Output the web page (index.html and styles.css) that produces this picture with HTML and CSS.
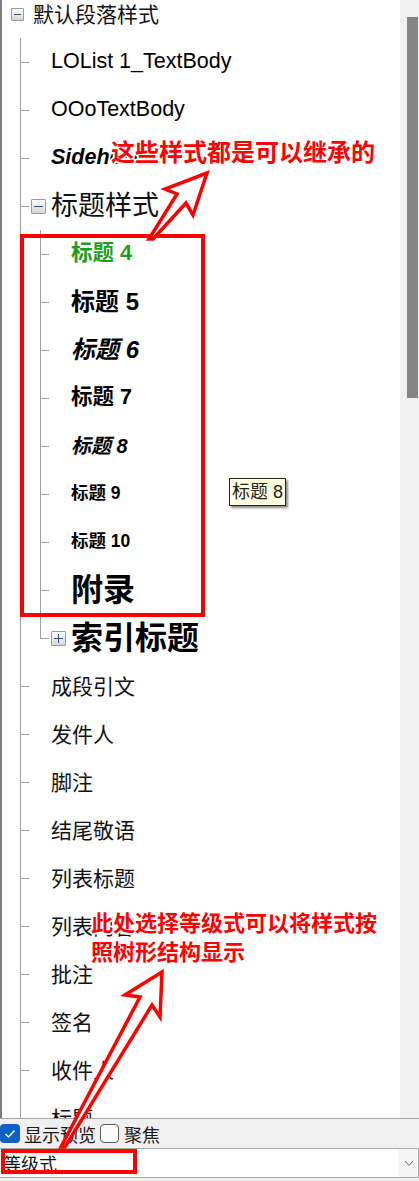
FILE: index.html
```html
<!DOCTYPE html>
<html lang="zh-CN">
<head>
<meta charset="utf-8">
<title>样式</title>
<link rel="stylesheet" href="styles.css">
</head>
<body>
<div class="panel">
  <div class="tree-area">
    <div class="viewport">
      <ul class="tree">
        <li>
          <div class="row has-exp"><span class="exp"></span><span class="lbl root-lbl">默认段落样式</span></div>
          <ul class="children">
            <li><div class="row"><span class="lbl lat">LOList 1_TextBody</span></div></li>
            <li><div class="row"><span class="lbl lat">OOoTextBody</span></div></li>
            <li><div class="row"><span class="lbl lat side">Sidehead</span></div></li>
            <li>
              <div class="row has-exp"><span class="exp"></span><span class="lbl hs">标题样式</span></div>
              <ul class="children">
                <li><div class="row"><span class="lbl h4">标题 4</span></div></li>
                <li><div class="row"><span class="lbl h5">标题 5</span></div></li>
                <li><div class="row"><span class="lbl h6">标题 6</span></div></li>
                <li><div class="row"><span class="lbl h7">标题 7</span></div></li>
                <li><div class="row"><span class="lbl h8">标题 8</span></div></li>
                <li><div class="row"><span class="lbl h9">标题 9</span></div></li>
                <li><div class="row"><span class="lbl h10">标题 10</span></div></li>
                <li><div class="row"><span class="lbl hx">附录</span></div></li>
                <li><div class="row has-exp"><span class="exp plus"></span><span class="lbl hx">索引标题</span></div></li>
              </ul>
            </li>
            <li><div class="row"><span class="lbl cn">成段引文</span></div></li>
            <li><div class="row"><span class="lbl cn">发件人</span></div></li>
            <li><div class="row"><span class="lbl cn">脚注</span></div></li>
            <li><div class="row"><span class="lbl cn">结尾敬语</span></div></li>
            <li><div class="row"><span class="lbl cn">列表标题</span></div></li>
            <li><div class="row"><span class="lbl cn">列表内容</span></div></li>
            <li><div class="row"><span class="lbl cn">批注</span></div></li>
            <li><div class="row"><span class="lbl cn">签名</span></div></li>
            <li><div class="row"><span class="lbl cn">收件人</span></div></li>
            <li><div class="row"><span class="lbl cn">标题</span></div></li>
          </ul>
        </li>
      </ul>
    </div>
    <div class="vscroll"><div class="thumb"></div></div>
  </div>

  <div class="options">
    <span class="cb checked"><svg width="12" height="10" viewBox="0 0 12 10"><polyline points="1.5,5 4.5,8 10.5,1.5" fill="none" stroke="#fff" stroke-width="1.4"/></svg></span>
    <span class="opt-text">显示预览</span>
    <span class="cb unchecked"></span>
    <span class="opt-text">聚焦</span>
  </div>

  <div class="combo">
    <span class="combo-text">等级式</span>
    <span class="combo-btn"><svg width="10" height="7" viewBox="0 0 10 7"><polyline points="1,1 5,5.5 9,1" fill="none" stroke="#666" stroke-width="1"/></svg></span>
  </div>

  <div class="tooltip">标题 8</div>
  <div class="ann-box ann-box1"></div>
  <div class="ann-box ann-box2"></div>
  <div class="ann-text ann-text1">这些样式都是可以继承的</div>
  <div class="ann-text ann-text2">此处选择等级式可以将样式按<br>照树形结构显示</div>
  <svg class="arrows" width="419" height="1181" viewBox="0 0 419 1181">
    <polygon points="207,173 165,189 177,194 149,239 153,239 186,203 193,215" fill="#fff" stroke="#ff0000" stroke-width="3.5" stroke-linejoin="miter"/>
    <polygon points="162,972 125,995 140,997 61,1147 65,1147 152,1005 160,1017" fill="#fff" stroke="#ff0000" stroke-width="3.5" stroke-linejoin="miter"/>
  </svg>
</div>
</body>
</html>
```
FILE: styles.css
```css
* { box-sizing: border-box; }
html, body { margin: 0; padding: 0; }
body {
  width: 419px;
  height: 1181px;
  overflow: hidden;
  background: #f0f0f0;
  font-family: "Liberation Sans", "Noto Sans CJK SC", sans-serif;
  color: #000;
}
.panel {
  position: relative;
  width: 419px;
  height: 1181px;
  display: flex;
  flex-direction: column;
}
.tree-area {
  display: flex;
  height: 1119px;
  border-bottom: 1px solid #a3a3a3;
  flex: none;
}
.viewport {
  flex: 1;
  overflow: hidden;
  background: #fff;
  border-left: 2px solid #7d7d7d;
}
.vscroll {
  width: 19px;
  background: #f0f0f0;
  padding: 17px 1px 0 7px;
}
.thumb {
  height: 381px;
  background: #858585;
}
ul { list-style: none; margin: 0; padding: 0; }
.tree { margin-top: -10px; }
.row {
  height: 48px;
  display: flex;
  align-items: center;
  padding-left: 31px;
  white-space: nowrap;
}
.row.has-exp { padding-left: 11px; }
.tree > li > .row.has-exp { padding-left: 9px; }
.exp {
  position: relative;
  flex: none;
  width: 15px;
  height: 15px;
  margin-right: 5px;
  border: 1px solid #9a9a9a;
  border-radius: 1px;
  background: linear-gradient(#fdfdfd, #d6d6d6);
}
.tree > li > .row > .exp { width: 13px; height: 13px; margin-right: 9px; }
.exp::before {
  content: "";
  position: absolute;
  left: 2px;
  right: 2px;
  top: 50%;
  margin-top: -0.5px;
  height: 1px;
  background: #2e4f9e;
}
.exp.plus::after {
  content: "";
  position: absolute;
  top: 2px;
  bottom: 2px;
  left: 50%;
  margin-left: -0.5px;
  width: 1px;
  background: #2e4f9e;
}
.children { margin-left: 18px; }
.children .children { margin-left: 20px; }
.children > li { position: relative; }
.children > li::before {
  content: "";
  position: absolute;
  left: 0;
  top: 0;
  bottom: 0;
  border-left: 1px solid #a0a0a0;
}
.children > li:last-child::before { bottom: auto; height: 24px; }
.children > li::after {
  content: "";
  position: absolute;
  left: 0;
  top: 24px;
  width: 9px;
  border-top: 1px solid #a0a0a0;
}
.lbl { line-height: 1; }
.root-lbl { font-size: 21px; color: #111; }
.lat { font-size: 21.5px; }
.side { font-weight: bold; font-style: italic; }
.cn { font-size: 21px; color: #111; }
.hs { font-size: 27px; color: #111; }
.h4 { font-size: 21.5px; font-weight: bold; color: #1d9e1d; }
.h5 { font-size: 24px; font-weight: bold; }
.h6 { font-size: 24px; font-weight: bold; font-style: italic; }
.h7 { font-size: 21.5px; font-weight: bold; }
.h8 { font-size: 20px; font-weight: bold; font-style: italic; }
.h9 { font-size: 17.5px; font-weight: bold; }
.h10 { font-size: 17.5px; font-weight: bold; }
.hx { font-size: 32px; font-weight: bold; }

.options {
  height: 29px;
  flex: none;
  display: flex;
  align-items: center;
  font-family: "Noto Sans CJK SC", sans-serif;
  font-size: 18px;
  color: #1a1a1a;
}
.cb {
  flex: none;
  width: 20px;
  height: 19px;
  border-radius: 4px;
  display: flex;
  align-items: center;
  justify-content: center;
}
.cb.checked { background: #0b62c4; margin-right: 4px; }
.cb.unchecked {
  width: 19px;
  border: 1px solid #5a5a5a;
  background: #fbfbfb;
  margin-left: 4px;
  margin-right: 5px;
}
.combo {
  height: 30px;
  flex: none;
  display: flex;
  align-items: center;
  background: #fff;
  border: 1px solid #a9a9a9;
  border-left: none;
}
.combo-text {
  flex: 1;
  padding-left: 3px;
  font-family: "Noto Sans CJK SC", sans-serif;
  font-size: 18px;
  color: #111;
}
.combo-btn {
  width: 19px;
  height: 100%;
  background: #f5f5f5;
  display: flex;
  align-items: center;
  justify-content: center;
}

.tooltip {
  position: absolute;
  left: 229px;
  top: 478px;
  height: 28px;
  padding: 0 2px;
  line-height: 26px;
  font-size: 18px;
  color: #222;
  background: #ffffe1;
  border: 1px solid #222;
  box-shadow: 2px 2px 2px rgba(0, 0, 0, 0.45);
  white-space: nowrap;
}
.ann-box {
  position: absolute;
  border: 4px solid #ff0000;
}
.ann-box1 { left: 20px; top: 234px; width: 185px; height: 383px; }
.ann-box2 { left: 1px; top: 1149px; width: 136px; height: 25px; }
.ann-text {
  position: absolute;
  font-family: "Noto Sans CJK SC", sans-serif;
  font-weight: bold;
  color: #ff0000;
  white-space: nowrap;
  text-shadow: 1px 0 #fff, -1px 0 #fff, 0 1px #fff, 0 -1px #fff,
    1px 1px #fff, -1px -1px #fff, 1px -1px #fff, -1px 1px #fff,
    2px 0 #fff, -2px 0 #fff, 0 2px #fff, 0 -2px #fff;
}
.ann-text1 { left: 111px; top: 139px; font-size: 24px; line-height: 24px; }
.ann-text2 { left: 91px; top: 907px; font-size: 22px; line-height: 29px; }
.arrows {
  position: absolute;
  left: 0;
  top: 0;
  pointer-events: none;
}
```
